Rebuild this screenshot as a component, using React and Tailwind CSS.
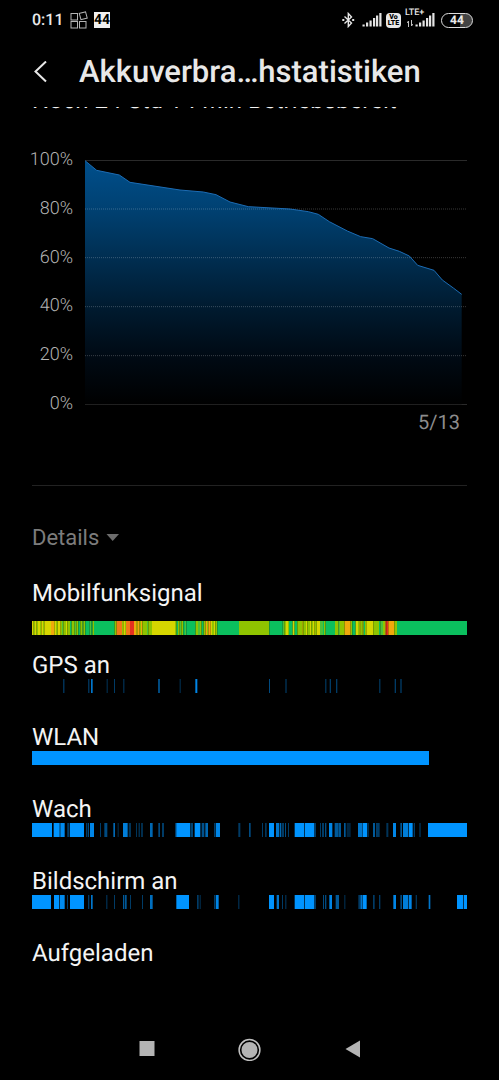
import React, { useState } from 'react';

// [x, y] on a 1146 x 732 plot, y grows downwards from 100%
const levels = [
  [0, 2], [35, 31], [103, 45], [135, 67], [285, 90], [355, 96], [393, 104], [435, 126],
  [490, 140], [615, 147], [670, 155], [700, 163], [733, 185], [787, 213], [827, 230],
  [863, 236], [912, 264], [943, 274], [973, 288], [998, 316], [1047, 331], [1072, 360],
  [1105, 384], [1130, 403],
];

const ticks = ['100%', '80%', '60%', '40%', '20%', '0%'];

const G = '#0bbf5e';
const M = '#4cc238';
const L = '#8fc400';
const Y = '#d6d600';
const O = '#f0a80c';
const D = '#f07818';
const R = '#e63020';

// [start, colour], each one runs until the next
const signal = [
  [0, Y], [5, L], [9, Y], [14, L], [18, Y], [24, L], [28, Y], [33, L], [37, Y], [57, O], [67, Y],
  [72, L], [77, Y], [86, L], [90, M], [94, L], [102, Y], [106, L], [114, G], [119, L], [128, M],
  [133, L], [139, G], [145, L], [151, M], [155, L], [160, G], [173, M], [178, G], [182, L],
  [186, G], [248, L], [254, D], [270, L], [274, Y], [279, L], [282, D], [294, R], [306, O],
  [313, Y], [317, O], [323, L], [327, O], [331, L], [345, M], [349, L], [360, Y], [429, L],
  [434, G], [438, L], [443, M], [448, L], [454, G], [459, M], [463, G], [491, L], [498, M],
  [504, L], [509, G], [515, L], [521, O], [525, L], [529, O], [536, Y], [540, L], [546, Y],
  [550, L], [556, G], [621, L], [712, G], [752, M], [757, L], [762, Y], [768, L], [771, G],
  [782, Y], [788, G], [796, L], [811, Y], [814, L], [822, Y], [826, L], [834, Y], [838, L],
  [843, Y], [848, L], [854, Y], [864, M], [873, G], [876, L], [881, G], [909, L], [919, M],
  [924, L], [938, O], [956, L], [961, G], [971, Y], [978, L], [982, Y], [986, L], [992, Y],
  [995, G], [999, L], [1003, Y], [1024, L], [1041, G], [1045, M], [1053, L], [1060, D],
  [1063, R], [1069, O], [1087, L], [1095, G],
];

// [start, width, strength]
const gps = [
  [94, 3, 0.5], [169, 3, 0.5], [177, 5, 0.8], [224, 3, 0.35], [246, 3, 0.4], [274, 3, 0.4],
  [379, 4, 0.75], [443, 3, 0.35], [490, 6, 0.9], [711, 3, 0.5], [760, 4, 0.35], [880, 3, 0.45],
  [893, 4, 0.4], [912, 4, 0.4], [1042, 3, 0.45], [1088, 4, 0.4], [1105, 4, 0.4],
];

const wifi = [[0, 1191, 1]];

const awake = [
  [0, 60, 1], [65, 18, 1], [85, 13, 0.95], [105, 3, 0.3], [109, 3, 0.6], [114, 42, 1],
  [162, 3, 0.4], [167, 4, 0.5], [174, 12, 0.9], [204, 3, 0.4], [217, 9, 0.5], [244, 5, 0.7],
  [257, 3, 0.3], [273, 14, 0.85], [290, 7, 0.35], [312, 3, 0.35], [320, 3, 0.45], [328, 4, 0.45],
  [354, 8, 0.7], [379, 5, 0.5], [391, 4, 0.6], [429, 5, 0.4], [433, 41, 1], [475, 8, 0.45],
  [488, 17, 1], [509, 8, 0.55], [520, 8, 0.7], [546, 5, 0.4], [552, 12, 0.9], [619, 6, 0.4],
  [651, 5, 0.5], [690, 3, 0.4], [699, 5, 0.35], [711, 15, 1], [732, 10, 0.8], [744, 4, 0.7],
  [750, 6, 0.4], [759, 3, 0.5], [768, 3, 0.4], [788, 29, 1], [819, 28, 1], [848, 4, 0.4],
  [864, 3, 0.4], [871, 4, 0.6], [879, 4, 0.5], [891, 10, 0.9], [908, 10, 0.6], [919, 8, 0.6],
  [936, 5, 0.6], [944, 12, 0.25], [978, 13, 0.8], [992, 13, 1], [1006, 4, 0.4], [1023, 6, 0.6],
  [1032, 11, 0.4], [1063, 6, 0.35], [1083, 9, 0.9], [1105, 5, 0.6], [1113, 15, 0.85],
  [1130, 12, 1], [1145, 4, 0.4], [1162, 4, 0.35], [1188, 117, 1],
];

const screen = [
  [0, 57, 1], [66, 16, 1], [84, 14, 0.95], [105, 3, 0.4], [114, 42, 1], [168, 4, 0.4],
  [177, 5, 0.8], [223, 3, 0.4], [246, 3, 0.4], [273, 4, 0.6], [279, 5, 0.6], [294, 3, 0.4],
  [330, 3, 0.4], [354, 8, 0.75], [433, 38, 1], [495, 5, 0.4], [503, 3, 0.35], [546, 5, 0.4],
  [552, 8, 0.9], [619, 3, 0.4], [711, 15, 1], [734, 7, 0.8], [750, 3, 0.4], [760, 3, 0.4],
  [788, 29, 1], [819, 28, 1], [848, 4, 0.4], [873, 3, 0.5], [879, 4, 0.5], [892, 8, 0.9],
  [911, 10, 0.6], [937, 3, 0.35], [979, 5, 0.4], [985, 6, 0.8], [992, 12, 1], [1023, 5, 0.4],
  [1041, 4, 0.4], [1084, 8, 0.9], [1105, 5, 0.5], [1113, 15, 0.85], [1130, 9, 0.9],
  [1151, 4, 0.35], [1190, 5, 0.8], [1275, 19, 1], [1296, 9, 1],
];

const rows = [
  { name: 'GPS an', spans: gps },
  { name: 'WLAN', spans: wifi },
  { name: 'Wach', spans: awake },
  { name: 'Bildschirm an', spans: screen },
  { name: 'Aufgeladen', spans: [] },
];

const SignalBars = () => (
  <svg className="h-4 w-5" viewBox="0 0 20 16" fill="#e4e4e4">
    <rect x="0.5" y="12.5" width="2.2" height="2" />
    <rect x="4" y="10.5" width="2.2" height="4" />
    <rect x="7.5" y="8.5" width="2.2" height="6" />
    <rect x="11" y="6" width="2.2" height="8.5" />
    <rect x="14" y="3.5" width="2.2" height="11" />
    <rect x="17.3" y="1" width="2.2" height="13.5" />
  </svg>
);

const StatusBar = () => (
  <div className="flex h-10 items-center pl-8 pr-[26px] text-[#e8e8e8]">
    <span className="w-[38px] text-base font-medium">0:11</span>
    <svg className="h-[18px] w-[18px]" viewBox="0 0 18 18" fill="none" stroke="#b4b4b4">
      <rect x="1" y="2.5" width="6.5" height="6.5" />
      <rect x="1" y="10.5" width="6.5" height="6.5" />
      <rect x="9.5" y="10.5" width="6.5" height="6.5" />
      <rect x="10" y="1.5" width="6.5" height="6.5" transform="rotate(-15 13.25 4.75)" />
    </svg>
    <span className="ml-1.5 flex h-4 w-4 items-center justify-center bg-[#f0f0f0] text-sm font-bold text-black">
      44
    </span>

    <div className="ml-auto flex items-center">
      <svg className="h-4 w-3.5" viewBox="0 0 14 16" fill="none" stroke="#e4e4e4" strokeWidth="1.4">
        <path d="M2.5 4.5 9.5 11 6.3 14.5V1.5L9.5 5 2.5 11.5" />
        <path d="M0.3 8H2.3M10.2 8H12.2" strokeWidth="1.8" />
      </svg>
      <span className="ml-1.5">
        <SignalBars />
      </span>
      <span className="ml-1 flex h-[15px] w-[15px] flex-col items-center justify-center rounded-sm bg-[#e8e8e8] text-[7px] font-black leading-[6px] text-black">
        <span>Vo</span>
        <span>LTE</span>
      </span>
      <span className="relative ml-3.5">
        <span className="absolute -left-2.5 -top-1 text-[9px] font-medium leading-[10px]">LTE+</span>
        <svg className="absolute -left-2 top-2 h-2 w-1.5" viewBox="0 0 6 8" fill="none" stroke="#c4c4c4">
          <path d="M1.5 7V1L0 3M4.5 0V6L6 4" />
        </svg>
        <SignalBars />
      </span>
      <span className="ml-1.5 flex h-[15px] w-8 items-center justify-center rounded-full border border-[#dcdcdc] bg-[linear-gradient(90deg,#000_60%,#444_60%)] text-xs font-bold">
        44
      </span>
    </div>
  </div>
);

const Chart = () => {
  const line = levels.map((p) => p.join(',')).join(' ');

  return (
    <div className="mt-[35px] flex gap-3">
      <div className="mt-px flex h-[264px] w-[41px] flex-col items-end justify-between text-lg font-light leading-5 text-[#b4b4b4]">
        {ticks.map((t) => (
          <span key={t}>{t}</span>
        ))}
      </div>
      <div className="mt-[11px] flex-1">
        <svg className="block h-[245px] w-full" viewBox="0 0 1146 735" preserveAspectRatio="none">
          <defs>
            <linearGradient id="fill" x1="0" y1="0" x2="0" y2="735" gradientUnits="userSpaceOnUse">
              <stop offset="0" stopColor="#004f8c" />
              <stop offset="0.2" stopColor="#004172" />
              <stop offset="0.4" stopColor="#002e51" />
              <stop offset="0.6" stopColor="#001b30" />
              <stop offset="0.8" stopColor="#000a14" />
              <stop offset="1" stopColor="#000000" />
            </linearGradient>
          </defs>
          <path d="M0 1.5H1146M0 733.5H1146" stroke="#2a2a2a" strokeWidth="3" />
          <polygon points={`0,733 ${line} 1130,733`} fill="url(#fill)" />
          <path
            d="M0 147H1146M0 293H1146M0 440H1146M0 587H1146"
            stroke="#ffffff"
            strokeOpacity="0.22"
            strokeWidth="3"
            strokeDasharray="3 3"
          />
          <polyline points={line} fill="none" stroke="#1c6cb4" strokeWidth="3" />
        </svg>
        <p className="mt-[7px] pr-[7px] text-right text-xl leading-5 text-[#8c8c8c]">5/13</p>
      </div>
    </div>
  );
};

const Timeline = ({ spans }) => (
  <svg className="block h-3.5 w-full" viewBox="0 0 1305 42" preserveAspectRatio="none">
    {spans.map(([x, w, a]) => (
      <rect key={x} x={x} width={w} height="42" fill="#0094ff" fillOpacity={a} />
    ))}
  </svg>
);

const App = () => {
  const [open, setOpen] = useState(true);

  return (
    <div className="flex min-h-screen flex-col bg-black font-['Roboto',sans-serif] text-[#f4f4f4] [text-rendering:geometricPrecision]">
      <StatusBar />

      <header className="flex h-[67px] items-center pb-0.5 pl-8">
        <button type="button" aria-label="Zurück" className="w-[47px]">
          <svg className="h-6 w-4" viewBox="0 0 16 24" fill="none" stroke="#e8e8e8" strokeWidth="2">
            <path d="M14 0.5 3.5 10.5 14 20.5" />
          </svg>
        </button>
        <h1 className="whitespace-nowrap text-[31px] font-medium text-[#e8e8e8]">
          Akkuverbra…hstatistiken
        </h1>
      </header>

      {/* scrolled a little, the remaining time slides under the header */}
      <main className="overflow-hidden px-8">
        <p className="-mt-[21px] whitespace-nowrap text-2xl leading-7">
          Noch 24 Std 14 Min Betriebsbereit
        </p>
        <Chart />

        <hr className="mt-[53px] border-[#222222]" />

        <button
          type="button"
          aria-expanded={open}
          onClick={() => setOpen(!open)}
          className="mt-[38px] flex items-center gap-1.5 text-[22px] leading-7 text-[#7c7c7c]"
        >
          Details
          <svg className="h-2 w-3.5" viewBox="0 0 14 8" fill="#6c6c6c">
            <path d="M1.5 0H14L7.7 7Z" />
          </svg>
        </button>

        {open && (
          <div className="mt-[27px] text-2xl leading-7">
            <section>
              <h2>Mobilfunksignal</h2>
              <svg className="mb-4 mt-3.5 block h-3.5 w-full" viewBox="0 0 1305 42" preserveAspectRatio="none">
                {signal.map(([x, color], i) => (
                  <rect
                    key={x}
                    x={x}
                    width={(i + 1 < signal.length ? signal[i + 1][0] : 1305) - x}
                    height="42"
                    fill={color}
                  />
                ))}
              </svg>
            </section>
            {rows.map((row) => (
              <section key={row.name} className="h-[72px]">
                <h2>{row.name}</h2>
                <Timeline spans={row.spans} />
              </section>
            ))}
          </div>
        )}
      </main>

      <nav className="mt-auto flex h-[62px] items-center justify-center gap-[79px]">
        <button type="button" aria-label="Übersicht">
          <svg className="h-6 w-6" viewBox="0 0 24 24" fill="#b4b4b4">
            <rect x="4.5" y="4" width="15" height="15" />
          </svg>
        </button>
        <button type="button" aria-label="Startseite">
          <svg className="h-6 w-6" viewBox="0 0 24 24">
            <circle cx="11.5" cy="13" r="10.4" fill="none" stroke="#c0c0c0" strokeWidth="1.5" />
            <circle cx="11.5" cy="13" r="8" fill="#b4b4b4" />
          </svg>
        </button>
        <button type="button" aria-label="Zurück">
          <svg className="h-6 w-6" viewBox="0 0 24 24" fill="#b4b4b4">
            <path d="M4.5 12 19 3.5V20.5Z" />
          </svg>
        </button>
      </nav>
    </div>
  );
};

export default App;
